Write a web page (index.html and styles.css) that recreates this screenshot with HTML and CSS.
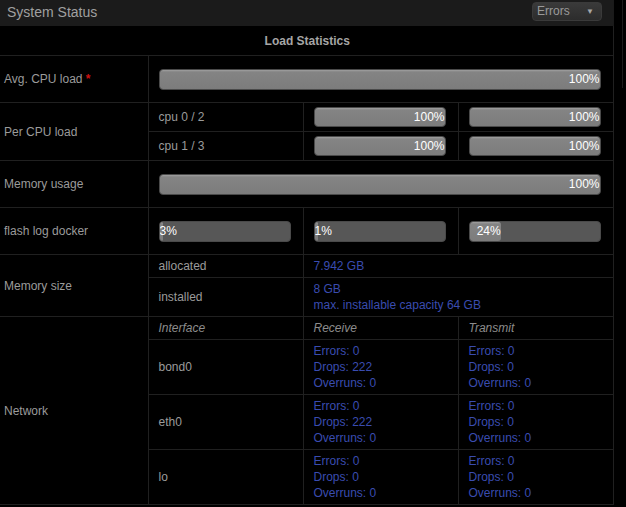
FILE: index.html
```html
<!DOCTYPE html>
<html lang="en">
<head>
    <meta charset="UTF-8">
    <title>System Status</title>
    <link rel="stylesheet" href="styles.css">
</head>
<body>
    <div class="page">
        <div class="panel">
            <div class="panel-head">
                <span class="panel-title">System Status</span>
                <div class="select">Errors <span class="caret">&#9660;</span></div>
            </div>
            <table class="stats">
                <colgroup>
                    <col class="c1"><col class="c2"><col class="c3"><col class="c4">
                </colgroup>
                <tr class="caption-row">
                    <th colspan="4">Load Statistics</th>
                </tr>
                <tr class="bar-row">
                    <td class="label">Avg. CPU load <span class="req">*</span></td>
                    <td colspan="3"><div class="bar"><div class="fill" style="width: 100%">100%</div></div></td>
                </tr>
                <tr class="sub-row">
                    <td class="label" rowspan="2">Per CPU load</td>
                    <td>cpu 0 / 2</td>
                    <td><div class="bar"><div class="fill" style="width: 100%">100%</div></div></td>
                    <td><div class="bar"><div class="fill" style="width: 100%">100%</div></div></td>
                </tr>
                <tr class="sub-row">
                    <td>cpu 1 / 3</td>
                    <td><div class="bar"><div class="fill" style="width: 100%">100%</div></div></td>
                    <td><div class="bar"><div class="fill" style="width: 100%">100%</div></div></td>
                </tr>
                <tr class="bar-row">
                    <td class="label">Memory usage</td>
                    <td colspan="3"><div class="bar"><div class="fill" style="width: 100%">100%</div></div></td>
                </tr>
                <tr class="bar-row">
                    <td class="label">flash log docker</td>
                    <td><div class="bar"><div class="fill" style="width: 3%">3%</div></div></td>
                    <td><div class="bar"><div class="fill" style="width: 1%">1%</div></div></td>
                    <td><div class="bar"><div class="fill" style="width: 24%">24%</div></div></td>
                </tr>
                <tr class="info-row">
                    <td class="label" rowspan="2">Memory size</td>
                    <td>allocated</td>
                    <td colspan="2" class="value">7.942 GB</td>
                </tr>
                <tr class="info-row">
                    <td>installed</td>
                    <td colspan="2" class="value">8 GB<br>max. installable capacity 64 GB</td>
                </tr>
                <tr class="info-row head">
                    <td class="label" rowspan="4">Network</td>
                    <td><em>Interface</em></td>
                    <td><em>Receive</em></td>
                    <td><em>Transmit</em></td>
                </tr>
                <tr class="net-row">
                    <td>bond0</td>
                    <td class="value">Errors: 0<br>Drops: 222<br>Overruns: 0</td>
                    <td class="value">Errors: 0<br>Drops: 0<br>Overruns: 0</td>
                </tr>
                <tr class="net-row">
                    <td>eth0</td>
                    <td class="value">Errors: 0<br>Drops: 222<br>Overruns: 0</td>
                    <td class="value">Errors: 0<br>Drops: 0<br>Overruns: 0</td>
                </tr>
                <tr class="net-row">
                    <td>lo</td>
                    <td class="value">Errors: 0<br>Drops: 0<br>Overruns: 0</td>
                    <td class="value">Errors: 0<br>Drops: 0<br>Overruns: 0</td>
                </tr>
            </table>
        </div>
        <div class="side"></div>
    </div>
</body>
</html>
```

FILE: styles.css
```css
:root {
    --text-color: #9b9b9b;
    --border-color: #202020;
    --value-color: #3a4cb0;
}

body {
    margin: 0;
    background-color: #000;
    color: var(--text-color);
    font-family: 'Liberation Sans', Arial, sans-serif;
    font-size: 12px;
}

.page {
    display: flex;
    align-items: flex-start;
}

.panel {
    width: 613px;
    border-right: 1px solid #1a1a1a;
}

.side {
    width: 1px;
    height: 88px;
    margin-left: 8px;
    background-color: #1c1c1c;
}

/* Header bar */
.panel-head {
    height: 26px;
    background-color: #1b1b1b;
    display: flex;
    align-items: center;
    justify-content: space-between;
    padding: 0 11px 0 7px;
}

.panel-title {
    font-size: 14px;
    color: #a0a0a0;
    margin-top: -3px;
}

.select {
    width: 70px;
    height: 19px;
    margin-top: -3px;
    box-sizing: border-box;
    border: 1px solid #3a3a3a;
    border-radius: 4px;
    background: linear-gradient(#3a3a3a, #2c2c2c);
    color: #9a9a9a;
    font-size: 12px;
    line-height: 17px;
    padding: 0 0 0 4px;
    display: flex;
    justify-content: space-between;
}

.caret {
    font-size: 8px;
    color: #a8a8a8;
    margin-right: 7px;
}

/* Table */
.stats {
    width: 613px;
    border-collapse: collapse;
    table-layout: fixed;
}

.c1 { width: 148px; }
.c2, .c3, .c4 { width: 155px; }

.stats td, .stats th {
    border: 1px solid var(--border-color);
    padding: 3px 12px 3px 10px;
    line-height: 16px;
    vertical-align: middle;
    text-align: left;
}

.stats tr:first-child th {
    border-top: none;
    border-left: none;
}

.stats td:first-child {
    border-left: none;
}

.stats td.label {
    padding-left: 4px;
    font-size: 12px;
}

.caption-row th {
    height: 23px;
    text-align: center;
    font-weight: bold;
    color: #a6a6a6;
    padding-left: 14px;
}

.req {
    color: #cc1111;
    font-weight: bold;
}

.bar-row td {
    height: 40px;
}

.sub-row td {
    height: 22px;
}

.info-row td {
    height: 16px;
}

.net-row td {
    height: 48px;
}

.value {
    color: var(--value-color);
}

em {
    color: #8c8c8c;
}

/* Progress bars */
.bar {
    height: 21px;
    background-color: #575757;
    border: 1px solid #4a4a4a;
    border-radius: 4px;
    box-sizing: border-box;
    overflow: hidden;
}

.sub-row .bar {
    height: 20px;
}

.fill {
    height: 100%;
    min-width: 3px;
    background: linear-gradient(#a0a0a0 0, #848484 2px, #7c7c7c 100%);
    color: #fff;
    font-size: 12px;
    line-height: 19px;
    text-align: right;
    white-space: nowrap;
    border-radius: 3px;
    overflow: visible;
}
```
